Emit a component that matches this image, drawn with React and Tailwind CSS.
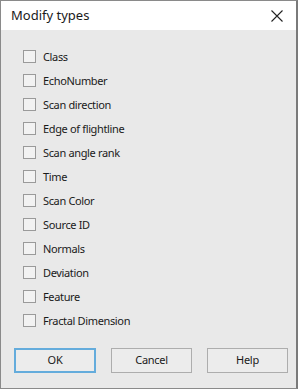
import React from "react";

const items = [
  "Class",
  "EchoNumber",
  "Scan direction",
  "Edge of flightline",
  "Scan angle rank",
  "Time",
  "Scan Color",
  "Source ID",
  "Normals",
  "Deviation",
  "Feature",
  "Fractal Dimension",
];

export default function App() {
  return (
    <div className="w-[300px] h-[390px] bg-white" style={{ fontFamily: '"Noto Sans", "Open Sans", sans-serif' }}>
      <div className="w-[298px] h-[389px] border border-[#8a8a8a] border-r-2 border-r-[#7a7a7a] flex flex-col bg-[#e9e9e9]">
        <div className="h-[29px] bg-white flex items-center justify-between pl-[10px] pr-[12px] shrink-0">
          <span className="text-[13px] text-[#1a1a1a] leading-none">Modify types</span>
          <svg width="12" height="12" viewBox="0 0 12 12" className="mr-[1px]">
            <path d="M0.5 0.5 L11.5 11.5 M11.5 0.5 L0.5 11.5" stroke="#222" strokeWidth="1.1" />
          </svg>
        </div>
        <div className="flex flex-col pt-[14px] pl-[22px]">
          {items.map((t) => (
            <div key={t} className="h-[24px] flex items-center gap-[7px]">
              <div className="w-[13px] h-[13px] border border-[#9a9a9a] bg-[#f2f2f2]" />
              <span className="text-[11px] tracking-[-0.35px] text-[#1a1a1a] leading-none">{t}</span>
            </div>
          ))}
        </div>
        <div className="flex pl-[13px] gap-[15px] mt-[16px]">
          <button className="w-[82px] h-[25px] border-2 border-[#64acdc] bg-[#ececec] text-[11px] tracking-[-0.3px] text-[#1a1a1a]">OK</button>
          <button className="w-[81px] h-[25px] border border-[#adadad] bg-[#ececec] text-[11px] tracking-[-0.3px] text-[#1a1a1a]">Cancel</button>
          <button className="w-[81px] h-[25px] border border-[#adadad] bg-[#ececec] text-[11px] tracking-[-0.3px] text-[#1a1a1a]">Help</button>
        </div>
      </div>
    </div>
  );
}
